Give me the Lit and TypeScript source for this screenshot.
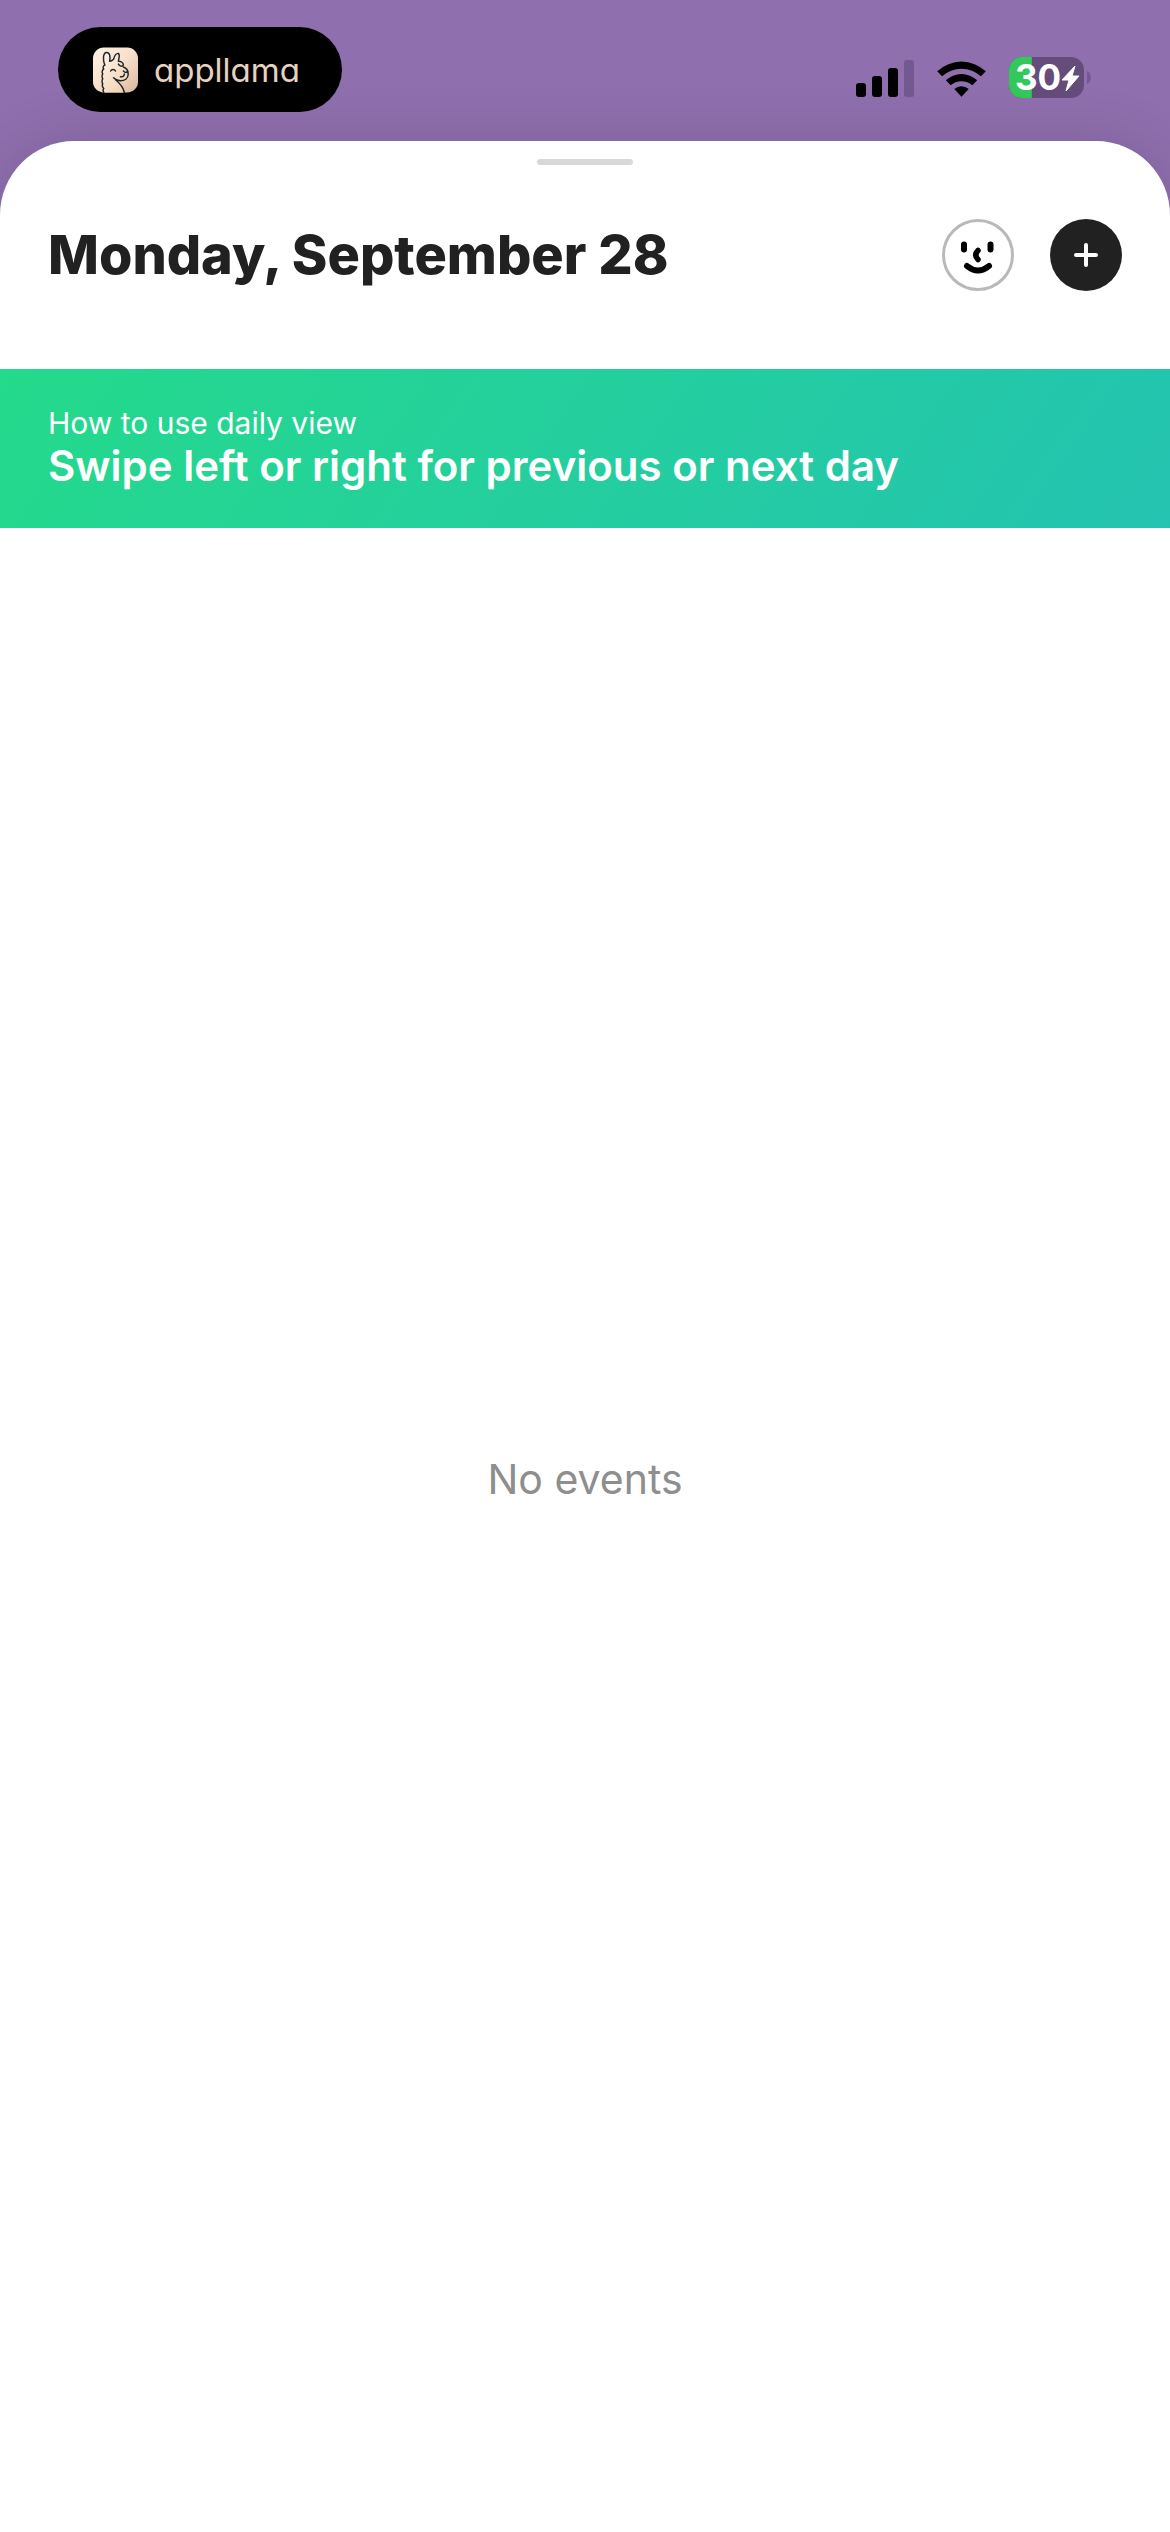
import { LitElement, html, css } from "lit";
import { customElement, property } from "lit/decorators.js";

@customElement("brand-pill")
class BrandPill extends LitElement {
  static styles = css`
    :host {
      display: flex;
      align-items: center;
      gap: 16px;
      height: 85px;
      box-sizing: border-box;
      padding: 0 42px 0 35px;
      border-radius: 43px;
      background: #000;
      color: #e7d2c0;
    }
    .mark {
      width: 45px;
      height: 46px;
      display: block;
    }
    .name {
      font: 400 33px/40px Inter, "Liberation Sans", sans-serif;
      font-feature-settings: "cv11" 1;
    }
  `;
  render() {
    return html`
      <svg class="mark" viewBox="0 0 46 46" aria-hidden="true">
        <defs>
          <linearGradient id="tile" x1="0" y1="0" x2="1" y2="1">
            <stop offset="0" stop-color="#fff0e2" />
            <stop offset="0.5" stop-color="#f8dfca" />
            <stop offset="1" stop-color="#d9b89d" />
          </linearGradient>
          <linearGradient id="wool" x1="0" y1="0" x2="1" y2="1">
            <stop offset="0" stop-color="#fff3e6" />
            <stop offset="1" stop-color="#f0cfae" />
          </linearGradient>
        </defs>
        <rect width="46" height="46" rx="11" fill="url(#tile)" />
        <path
          d="M12 18C10 13 10 5 14 5C17 5 18 9 18 14C20 12 20 8 25 6C28 6 27 11 26 13L31 15L32 20L36 25C38 30 34 35 28 34C24 34 24 33 22 31C27 35 31 40 32 46H10C10 36 9 25 12 18Z"
          fill="url(#wool)"
        />
        <g fill="none" stroke="#202428" stroke-width="1.5" stroke-linecap="round" stroke-linejoin="round">
          <path d="M12 18C10 13 10 5 14 5C17 5 18 9 17 14M17 14C19 14 20 13 21 12C22 8 24 6 26 6C28 8 26 12 26 14C28 14 31 15 31 18C30 20 27 19 26 17" />
          <path d="M31 20C34 21 36 24 36 27C36 32 32 34 28 34C25 34 23 33 21 31M31 24C33 26 35 26 35 24M32 27C32 29 30 30 28 30M18 24C19 22 22 22 23 24" />
          <path d="M12 18C10 19 10 21 11 22C9 23 9 26 10 27C9 28 9 31 10 32C9 33 9 36 10 37C9 39 10 41 11 42C10 43 10 44 11 46M23 33C28 37 31 41 32 46" />
        </g>
      </svg>
      <span class="name">appllama</span>
    `;
  }
}

@customElement("status-bar")
class StatusBar extends LitElement {
  @property({ type: Number }) battery = 30;

  static styles = css`
    :host {
      display: flex;
      justify-content: space-between;
      align-items: flex-start;
      box-sizing: border-box;
      height: 141px;
      padding: 27px 77px 0 58px;
    }
    .system {
      display: flex;
      align-items: center;
      gap: 22px;
      padding-top: 30px;
    }
    .bars,
    .wifi,
    .battery {
      display: block;
    }
    .level {
      font: 700 35px/41px Inter, "Liberation Sans", sans-serif;
    }
  `;

  render() {
    return html`
      <brand-pill></brand-pill>
      <div class="system">
        <svg class="bars" width="58" height="38" viewBox="0 0 58 38" role="img" aria-label="Cellular signal">
          <rect x="0" y="24" width="10" height="14" rx="3" />
          <rect x="16" y="17" width="10" height="21" rx="3" />
          <rect x="32" y="9" width="10" height="29" rx="3" />
          <rect x="48" y="1" width="10" height="37" rx="3" fill="#745991" />
        </svg>
        <svg class="wifi" width="51" height="38" viewBox="0 0 52 38" role="img" aria-label="Wi-Fi">
          <path d="M1.2 12.2A36 36 0 0 1 50.8 12.2L45.8 17.3A29 29 0 0 0 6.2 17.3Z" />
          <path d="M10 21.3A23.5 23.5 0 0 1 42 21.3L37 26.5A16.5 16.5 0 0 0 15 26.5Z" />
          <path d="M18.7 30.2A11 11 0 0 1 33.3 30.2L26 38Z" />
        </svg>
        <svg class="battery" width="84" height="41" viewBox="0 0 84 41" role="img" aria-label="Battery ${this.battery}%, charging">
          <defs>
            <clipPath id="shell"><rect width="75" height="41" rx="13" /></clipPath>
          </defs>
          <g clip-path="url(#shell)">
            <rect width="75" height="41" fill="#644d7a" />
            <rect width=${this.battery * 0.76} height="41" fill="#34c759" />
          </g>
          <path d="M78 14C83 16 83 25 78 27Z" fill="#745991" />
          <text class="level" x="6" y="33" fill="#fff">${this.battery}</text>
          <path d="M66 9L53 23H60L57 34L70 19H63Z" fill="#fff" stroke="#fff" stroke-linejoin="round" />
        </svg>
      </div>
    `;
  }
}

@customElement("tip-banner")
class TipBanner extends LitElement {
  @property() caption = "";
  @property() message = "";

  static styles = css`
    :host {
      display: flex;
      flex-direction: column;
      box-sizing: border-box;
      padding: 36px 48px 37px;
      color: #fff;
      background: linear-gradient(125deg, #24da8b, #24c3b1);
    }
    .caption,
    .message {
      margin: 0;
    }
    .caption {
      font-size: 30px;
      line-height: 36px;
    }
    .message {
      font-size: 42px;
      line-height: 50px;
      font-weight: 600;
    }
  `;

  render() {
    return html`
      <p class="caption">${this.caption}</p>
      <p class="message">${this.message}</p>
    `;
  }
}

@customElement("app-root")
class AppRoot extends LitElement {
  static styles = css`
    :host {
      display: flex;
      flex-direction: column;
      min-height: 100vh;
      background: #8f6fae;
      font-family: Inter, "Liberation Sans", sans-serif;
    }
    .sheet {
      flex: 1;
      display: flex;
      flex-direction: column;
      background: #fff;
      border-radius: 74px 74px 0 0;
      box-shadow: 0 0 60px rgba(0, 0, 0, 0.13);
    }
    .grabber {
      align-self: center;
      width: 96px;
      height: 6px;
      margin-top: 18px;
      border-radius: 3px;
      background: #d8d8d8;
    }
    .header {
      display: flex;
      align-items: center;
      gap: 36px;
      padding: 54px 48px 78px;
    }
    .title {
      flex: 1;
      margin: 0;
      font-size: 54px;
      line-height: 64px;
      font-weight: 800;
      color: #212121;
    }
    .round {
      width: 72px;
      height: 72px;
      padding: 0;
      border: 0;
      border-radius: 50%;
      background: #212121;
    }
    .round.face {
      background: #fff;
    }
    .round svg {
      display: block;
    }
    .events {
      flex: 1;
      display: flex;
      align-items: center;
      justify-content: center;
      padding-bottom: 102px;
    }
    .empty {
      margin: 0;
      font-size: 41px;
      line-height: 50px;
      color: #8e8e8e;
    }
  `;

  render() {
    return html`
      <status-bar></status-bar>
      <main class="sheet">
        <div class="grabber"></div>
        <header class="header">
          <h1 class="title">Monday, September 28</h1>
          <button class="round face" aria-label="Mood">
            <svg width="72" height="72" viewBox="0 0 72 72" fill="none" stroke="#000" stroke-linecap="round">
              <circle cx="36" cy="36" r="34.5" stroke="#b9b9b9" stroke-width="3" />
              <path d="M22 25.5V30.5M48.5 25.5V30.5" stroke-width="6" />
              <path d="M36 31.5Q31.5 36 36 40.5" stroke-width="5.5" />
              <path d="M25 47Q36 56 47 47" stroke-width="6" />
            </svg>
          </button>
          <button class="round" aria-label="Add event">
            <svg width="72" height="72" viewBox="0 0 72 72" fill="none" stroke="#fff" stroke-width="4" stroke-linecap="round">
              <path d="M36 26V46M26 36H46" />
            </svg>
          </button>
        </header>
        <tip-banner
          caption="How to use daily view"
          message="Swipe left or right for previous or next day"
        ></tip-banner>
        <section class="events">
          <p class="empty">No events</p>
        </section>
      </main>
    `;
  }
}
